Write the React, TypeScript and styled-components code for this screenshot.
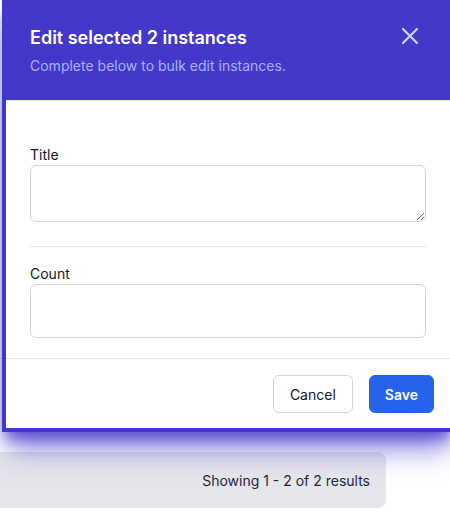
import React from 'react';
import styled, { createGlobalStyle } from 'styled-components';

const GlobalStyle = createGlobalStyle`
  * {
    box-sizing: border-box;
  }
  body {
    margin: 0;
    background: #ffffff;
    font-family: Inter, "Noto Sans", "Liberation Sans", sans-serif;
  }
`;

const Page = styled.div`
  position: relative;
  width: 450px;
  height: 513px;
  overflow: hidden;
  background: #ffffff;
`;

const BackgroundTable = styled.div`
  height: 452px;
  padding-top: 245px;
`;

const TableRow = styled.div`
  height: 57px;
  border-bottom: 1px solid #e5e7eb;
`;

const Pagination = styled.div`
  display: flex;
  align-items: center;
  justify-content: flex-end;
  margin-left: -20px;
  width: 406px;
  height: 56px;
  padding-right: 16px;
  border-radius: 8px;
  background: #e5e7eb;
  color: #1f2937;
  font-size: 14px;
`;

const Modal = styled.div`
  position: absolute;
  top: 0;
  left: 2px;
  width: 452px;
  border: 4px solid #4338ca;
  background: #ffffff;
  box-shadow: 0 10px 14px -4px rgba(67, 56, 202, 0.8),
    0 24px 26px -6px rgba(67, 56, 202, 0.55);
`;

const Header = styled.div`
  display: flex;
  justify-content: space-between;
  align-items: flex-start;
  margin: -4px -4px 0;
  padding: 24px 24px 24px 28px;
  background: #4338ca;
`;

const Title = styled.h2`
  margin: 0;
  font-size: 18px;
  line-height: 28px;
  font-weight: 600;
  color: #ffffff;
`;

const Subtitle = styled.p`
  margin: 4px 0 0;
  font-size: 14px;
  line-height: 20px;
  color: #a5b4fc;
`;

const CloseButton = styled.button`
  display: flex;
  margin: -2px 6px 0 0;
  padding: 0;
  border: 0;
  background: transparent;
  color: #c7d2fe;
  cursor: pointer;
`;

const Body = styled.div`
  padding: 44px 24px 20px;
  border-top: 1px solid #e5e7eb;
`;

const Label = styled.label`
  display: block;
  font-size: 14px;
  line-height: 20px;
  font-weight: 400;
  color: #111827;
`;

const TextArea = styled.textarea`
  display: block;
  width: 100%;
  height: 57px;
  margin: 0;
  padding: 8px 12px;
  border: 1px solid #d1d5db;
  border-radius: 6px;
  font-family: inherit;
  font-size: 14px;
  resize: vertical;
`;

const TextInput = styled.input`
  display: block;
  width: 100%;
  height: 54px;
  margin: 0;
  padding: 8px 12px;
  border: 1px solid #d1d5db;
  border-radius: 6px;
  font-family: inherit;
  font-size: 14px;
`;

const Divider = styled.hr`
  margin: 24px 0 17px;
  border: 0;
  border-top: 1px solid #e5e7eb;
`;

const Footer = styled.div`
  display: flex;
  justify-content: flex-end;
  gap: 16px;
  padding: 16px 16px 15px;
  border-top: 1px solid #e5e7eb;
`;

const Button = styled.button<{ $primary?: boolean }>`
  height: 38px;
  padding: 0 ${({ $primary }) => ($primary ? '15px' : '16px')};
  min-width: ${({ $primary }) => ($primary ? '64px' : '80px')};
  border-radius: 6px;
  border: 1px solid ${({ $primary }) => ($primary ? '#2563eb' : '#d1d5db')};
  background: ${({ $primary }) => ($primary ? '#2563eb' : '#ffffff')};
  color: ${({ $primary }) => ($primary ? '#ffffff' : '#111827')};
  font-family: inherit;
  font-size: 14px;
  font-weight: ${({ $primary }) => ($primary ? 600 : 400)};
  cursor: pointer;
`;

export default function App() {
  return (
    <Page>
      <GlobalStyle />
      <BackgroundTable>
        <TableRow />
        <TableRow />
      </BackgroundTable>
      <Pagination>Showing 1 - 2 of 2 results</Pagination>

      <Modal>
        <Header>
          <div>
            <Title>Edit selected 2 instances</Title>
            <Subtitle>Complete below to bulk edit instances.</Subtitle>
          </div>
          <CloseButton aria-label="Close">
            <svg width="28" height="28" viewBox="0 0 24 24" fill="none" stroke="currentColor" strokeWidth="2" strokeLinecap="round">
              <path d="M6 18L18 6M6 6l12 12" />
            </svg>
          </CloseButton>
        </Header>
        <Body>
          <Label htmlFor="title">Title</Label>
          <TextArea id="title" />
          <Divider />
          <Label htmlFor="count">Count</Label>
          <TextInput id="count" />
        </Body>
        <Footer>
          <Button>Cancel</Button>
          <Button $primary>Save</Button>
        </Footer>
      </Modal>
    </Page>
  );
}
